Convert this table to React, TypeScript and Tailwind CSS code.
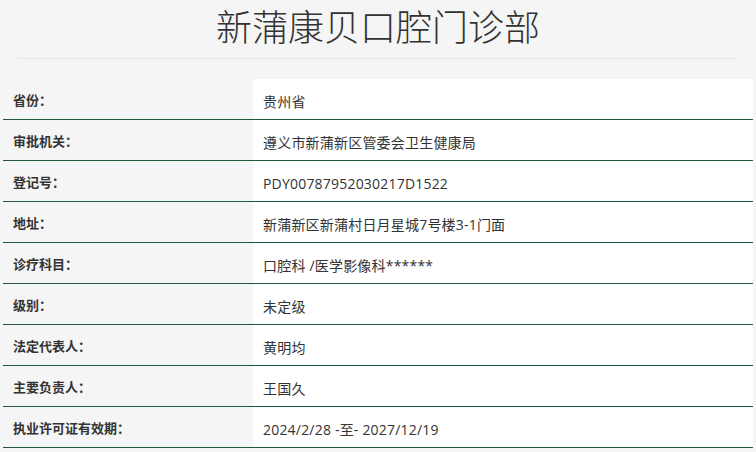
import React from 'react';

const rows: [string, string][] = [
  ['省份：', '贵州省'],
  ['审批机关：', '遵义市新蒲新区管委会卫生健康局'],
  ['登记号：', 'PDY00787952030217D1522'],
  ['地址：', '新蒲新区新蒲村日月星城7号楼3-1门面'],
  ['诊疗科目：', '口腔科 /医学影像科******'],
  ['级别：', '未定级'],
  ['法定代表人：', '黄明均'],
  ['主要负责人：', '王国久'],
  ['执业许可证有效期：', '2024/2/28 -至- 2027/12/19'],
];

export default function App() {
  return (
    <div
      className="w-[756px] h-[452px] bg-[#f5f5f5] text-[#333] overflow-hidden"
      style={{ fontFamily: '"Open Sans", "Noto Sans CJK SC", sans-serif' }}
    >
      <h1
        className="h-[58px] text-center text-[36px] leading-[50px] font-light text-[#333]"
        style={{ fontFamily: '"Noto Sans CJK SC", sans-serif' }}
      >
        新蒲康贝口腔门诊部
      </h1>
      <div className="mx-[18px] h-px bg-[#e6e6e6]" />
      <div className="mt-[20px] mx-[3px]">
        {rows.map(([label, value], i) => (
          <div key={i} className="flex h-[41px] border-b border-[#1f5a36]">
            <div className="w-[250px] flex items-center pl-[10px] pt-[4px] bg-[#f5f5f5] text-[13px] font-bold text-[#333]">
              {label}
            </div>
            <div className="flex-1 flex items-center pl-[10px] pt-[4px] bg-white text-[14px] tracking-[0.2px] text-[#333]">
              {value}
            </div>
          </div>
        ))}
      </div>
    </div>
  );
}
